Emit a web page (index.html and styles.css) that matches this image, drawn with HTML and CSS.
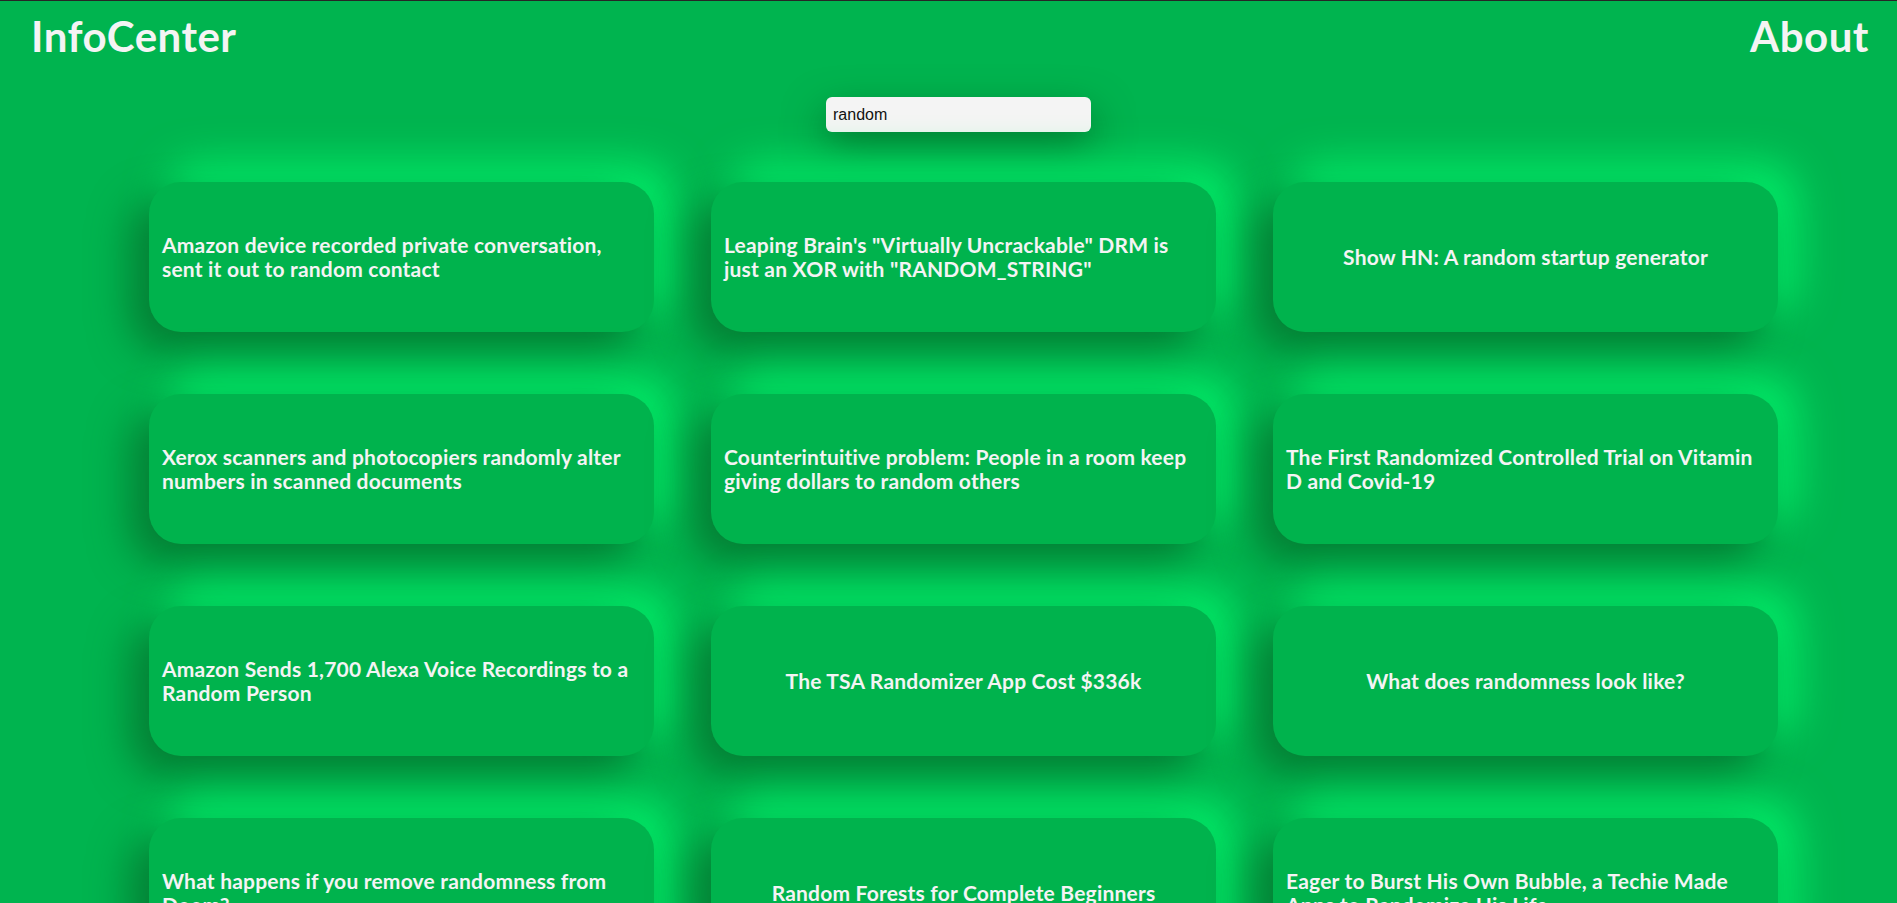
FILE: index.html
```html
<!DOCTYPE html>
<html lang="en">
<head>
<meta charset="utf-8">
<title>InfoCenter</title>
<link rel="stylesheet" href="styles.css">
</head>
<body>
<header class="topbar">
  <a class="brand" href="#">InfoCenter</a>
  <a class="nav-link" href="#">About</a>
</header>
<main class="main">
  <div class="search-row">
    <input class="search" type="text" value="random">
  </div>
  <section class="grid">
    <article class="card"><p class="card-title">Amazon device recorded private conversation, sent it out to random contact</p></article>
    <article class="card"><p class="card-title">Leaping Brain's "Virtually Uncrackable" DRM is just an XOR with "RANDOM_STRING"</p></article>
    <article class="card"><p class="card-title">Show HN: A random startup generator</p></article>
    <article class="card"><p class="card-title">Xerox scanners and photocopiers randomly alter numbers in scanned documents</p></article>
    <article class="card"><p class="card-title">Counterintuitive problem: People in a room keep giving dollars to random others</p></article>
    <article class="card"><p class="card-title">The First Randomized Controlled Trial on Vitamin D and Covid-19</p></article>
    <article class="card"><p class="card-title">Amazon Sends 1,700 Alexa Voice Recordings to a Random Person</p></article>
    <article class="card"><p class="card-title">The TSA Randomizer App Cost $336k</p></article>
    <article class="card"><p class="card-title">What does randomness look like?</p></article>
    <article class="card"><p class="card-title">What happens if you remove randomness from Doom?</p></article>
    <article class="card"><p class="card-title">Random Forests for Complete Beginners</p></article>
    <article class="card"><p class="card-title">Eager to Burst His Own Bubble, a Techie Made Apps to Randomize His Life</p></article>
  </section>
</main>
</body>
</html>
```

FILE: styles.css
```css
html, body {
  margin: 0;
  padding: 0;
}

body {
  background: #00b44f;
  border-top: 1px solid #262626;
  font-family: Lato, "Open Sans", sans-serif;
  color: #f4f4f4;
}

.topbar {
  display: flex;
  justify-content: space-between;
  align-items: flex-start;
  padding: 10px 28px 0 31px;
}

.brand,
.nav-link {
  color: #f4f4f4;
  text-decoration: none;
  font-weight: 700;
  font-size: 42px;
  line-height: 50px;
  letter-spacing: 0.5px;
}

.main {
  padding-bottom: 80px;
}

.search-row {
  display: flex;
  justify-content: center;
  padding-left: 20px;
  margin-top: 36px;
}

.search {
  box-sizing: border-box;
  width: 265px;
  height: 35px;
  border: none;
  border-radius: 6px;
  background: #f4f4f4;
  padding: 0 7px;
  font-family: "Liberation Sans", Arial, sans-serif;
  font-size: 16px;
  color: #111;
  outline: none;
  box-shadow: 0 16px 40px rgba(0, 85, 30, 0.7);
}

.grid {
  display: grid;
  grid-template-columns: repeat(3, 505px);
  grid-auto-rows: 150px;
  column-gap: 57px;
  row-gap: 62px;
  margin: 50px 0 0 149px;
}

.card {
  display: flex;
  align-items: center;
  justify-content: center;
  padding: 0 13px;
  border-radius: 32px;
  background: #00b34d;
  box-shadow: -18px 18px 40px #047c33, 18px -18px 40px #00ee6a;
}

.card-title {
  margin: 0;
  font-weight: 700;
  font-size: 21px;
  line-height: 24px;
  letter-spacing: 0.2px;
  color: #f4f4f4;
}
```
